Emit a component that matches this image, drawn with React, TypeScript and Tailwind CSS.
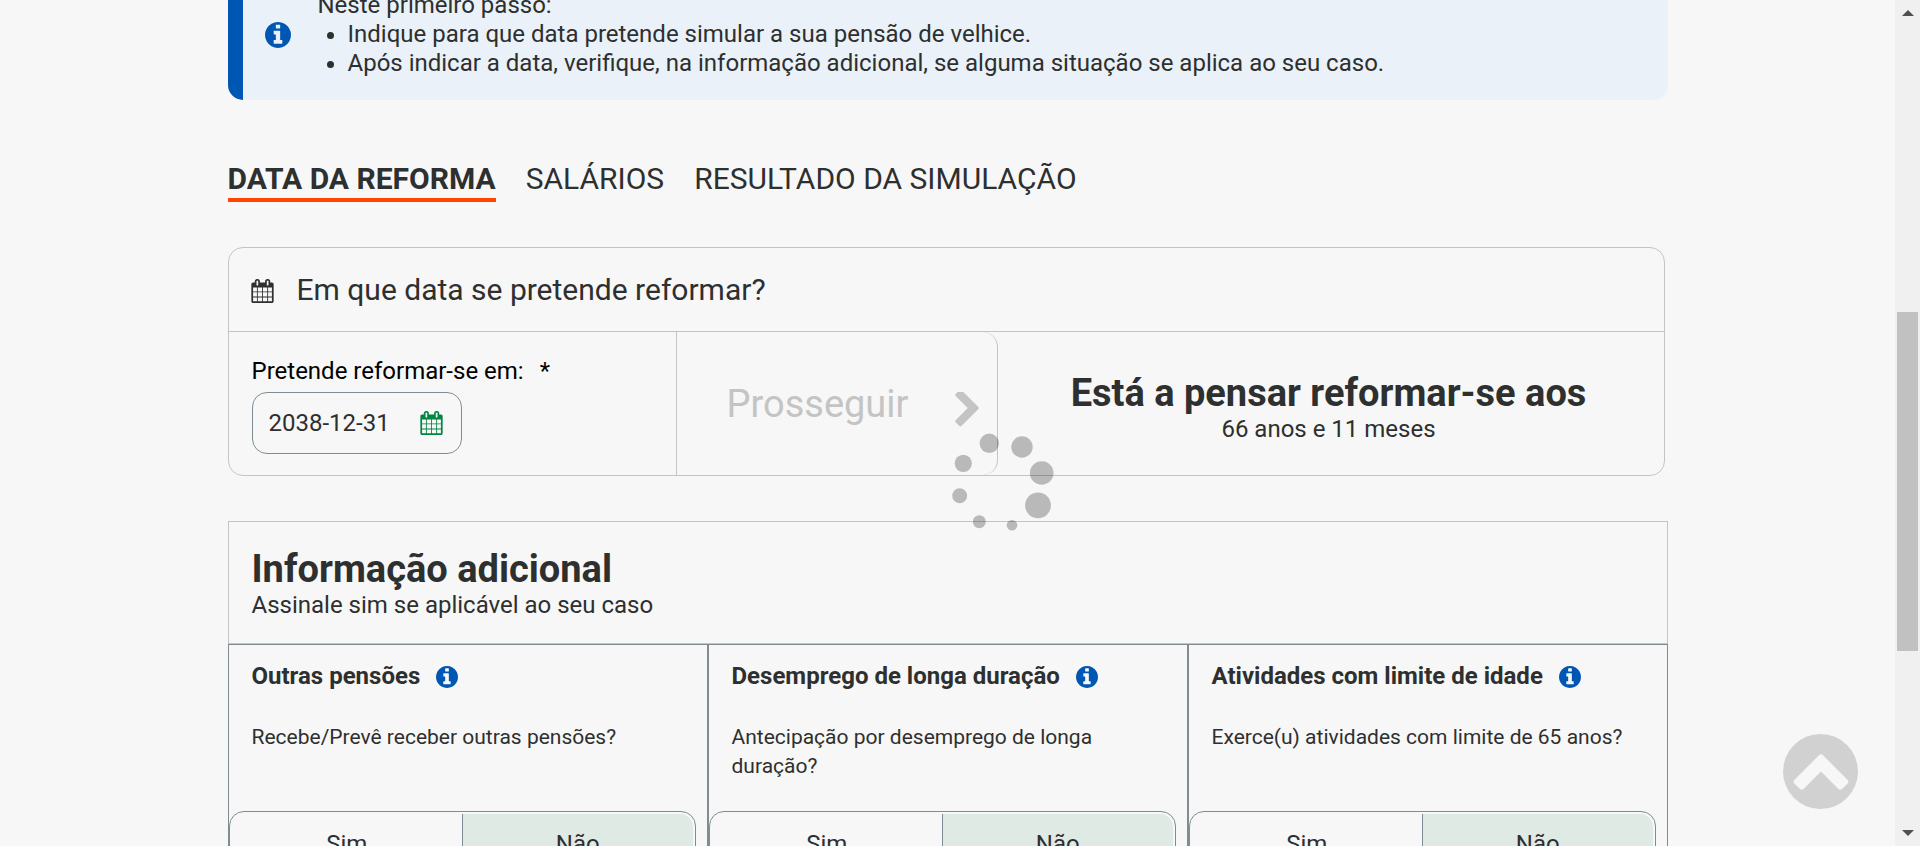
import React from "react";

const CALENDAR =
  "M192 1664h288v-288h-288v288zm352 0h320v-288h-320v288zm-352-352h288v-320h-288v320zm352 0h320v-320h-320v320zm-352-384h288v-288h-288v288zm736 736h320v-288h-320v288zm-384-736h320v-288h-320v288zm768 736h288v-288h-288v288zm-384-352h320v-320h-320v320zm-352-864v-288q0-13-9.5-22.5t-22.5-9.5h-64q-13 0-22.5 9.5t-9.5 22.5v288q0 13 9.5 22.5t22.5 9.5h64q13 0 22.5-9.5t9.5-22.5zm736 864h288v-320h-288v320zm-384-384h320v-288h-320v288zm384 0h288v-288h-288v288zm32-480v-288q0-13-9.5-22.5t-22.5-9.5h-64q-13 0-22.5 9.5t-9.5 22.5v288q0 13 9.5 22.5t22.5 9.5h64q13 0 22.5-9.5t9.5-22.5zm384-64v1280q0 52-38 90t-90 38h-1408q-52 0-90-38t-38-90v-1280q0-52 38-90t90-38h128v-96q0-66 47-113t113-47h64q66 0 113 47t47 113v96h384v-96q0-66 47-113t113-47h64q66 0 113 47t47 113v96h128q52 0 90 38t38 90z";
const INFO =
  "M1152 1376v-160q0-14-9-23t-23-9h-96v-512q0-14-9-23t-23-9h-320q-14 0-23 9t-9 23v160q0 14 9 23t23 9h96v320h-96q-14 0-23 9t-9 23v160q0 14 9 23t23 9h448q14 0 23-9t9-23zm-128-896v-160q0-14-9-23t-23-9h-192q-14 0-23 9t-9 23v160q0 14 9 23t23 9h192q14 0 23-9t9-23zm640 416q0 209-103 385.5t-279.5 279.5-385.5 103-385.5-103-279.5-279.5-103-385.5 103-385.5 279.5-279.5 385.5-103 385.5 103 279.5 279.5 103 385.5z";
const CHEVRON =
  "M1363 877l-742 742q-19 19-45 19t-45-19l-166-166q-19-19-19-45t19-45l531-531-531-531q-19-19-19-45t19-45l166-166q19-19 45-19t45 19l742 742q19 19 19 45t-19 45z";

function CalendarIcon({ className }: { className: string }) {
  return (
    <svg viewBox="64 0 1664 1792" fill="currentColor" aria-hidden="true" className={className}>
      <path d={CALENDAR} />
    </svg>
  );
}

function InfoIcon({ className }: { className: string }) {
  return (
    <svg viewBox="128 128 1536 1536" fill="currentColor" aria-hidden="true" className={className}>
      <path d={INFO} />
    </svg>
  );
}

const tabs = ["DATA DA REFORMA", "SALÁRIOS", "RESULTADO DA SIMULAÇÃO"];

const questions = [
  { title: "Outras pensões", text: "Recebe/Prevê receber outras pensões?" },
  { title: "Desemprego de longa duração", text: "Antecipação por desemprego de longa duração?" },
  { title: "Atividades com limite de idade", text: "Exerce(u) atividades com limite de 65 anos?" },
];

const dots = [
  [41.3, 11.3, 9.7],
  [74, 15, 10.7],
  [93.7, 41, 11.8],
  [90, 73.3, 12.9],
  [64, 93.3, 5.3],
  [31.3, 89.7, 6.5],
  [11.7, 63.7, 7.5],
  [15.3, 31.3, 8.6],
];

function Question({ title, text }: { title: string; text: string }) {
  return (
    <section className="border border-[#7f8d92]">
      <div className="flex h-[166px] flex-col gap-8 px-[23px] pt-[17px]">
        <div className="flex items-center gap-4">
          <h3 className="text-[24px] leading-[29px] font-bold">{title}</h3>
          <button type="button" aria-label={`Ajuda: ${title}`} className="text-[#0057b3]">
            <InfoIcon className="block size-[22px]" />
          </button>
        </div>
        <p className="text-[21px] leading-[29px]">{text}</p>
      </div>
      <div className="mr-[11px] grid grid-cols-2 rounded-[15px] border border-[#7f8d92] p-0.5 text-[24px] leading-[29px]">
        <button type="button" aria-pressed="false" className="py-4">
          Sim
        </button>
        <button
          type="button"
          aria-pressed="true"
          className="rounded-r-[13px] border-l border-[#7f8d92] bg-[#e0eae4] py-4"
        >
          Não
        </button>
      </div>
    </section>
  );
}

export default function App() {
  return (
    <div className="flex h-screen overflow-hidden bg-[#f7f7f7] font-['Roboto',sans-serif] text-[#2e2f2f]">
      <main className="min-w-0 flex-1">
        <div className="mx-auto -mt-8 max-w-[1440px]">
          <div className="flex items-center gap-[27px] rounded-[15px] border-l-[15px] border-[#0057b3] bg-[#eaf1f8] pt-[23px] pb-[22px] pl-[22px]">
            <InfoIcon className="size-[26px] shrink-0 text-[#0057b3]" />
            <div className="text-[24px] leading-[29px]">
              <p>Neste primeiro passo:</p>
              <ul className="list-disc pl-[30px]">
                <li>Indique para que data pretende simular a sua pensão de velhice.</li>
                <li>
                  Após indicar a data, verifique, na informação adicional, se alguma situação se
                  aplica ao seu caso.
                </li>
              </ul>
            </div>
          </div>

          <nav className="mt-[60px] flex gap-[30px] text-[30px] leading-[37px]">
            {tabs.map((tab, i) => (
              <a
                key={tab}
                href="#"
                className={
                  i === 0
                    ? "border-b-4 border-[#ff4500] pb-px font-bold"
                    : "border-b-4 border-transparent pb-px"
                }
              >
                {tab}
              </a>
            ))}
          </nav>

          <section className="mt-[45px] mr-[3px] rounded-[15px] border border-[#c4c4c4]">
            <header className="flex h-[84px] items-center gap-[23px] border-b border-[#c4c4c4] px-[22px]">
              <CalendarIcon className="mt-0.5 h-[24px] w-[23px]" />
              <h2 className="text-[30px] leading-[37px]">Em que data se pretende reformar?</h2>
            </header>
            <div className="grid grid-cols-[447fr_322fr_666fr]">
              <div className="px-[23px] pt-[25px] pb-[21px]">
                <label
                  htmlFor="data"
                  className="flex gap-4 text-[24px] leading-[29px] text-black"
                >
                  Pretende reformar-se em: <span>*</span>
                </label>
                <div className="mt-1.5 flex h-[62px] w-[210px] items-center rounded-[15px] border border-[#7f8d92] pr-[18px] pl-4">
                  <input
                    id="data"
                    type="text"
                    defaultValue="2038-12-31"
                    className="w-0 min-w-0 flex-1 bg-transparent text-[24px] leading-[29px] outline-none"
                  />
                  <button type="button" aria-label="Escolher data" className="text-[#008542]">
                    <CalendarIcon className="block h-[24px] w-[23px]" />
                  </button>
                </div>
              </div>
              <button
                type="button"
                disabled
                className="flex items-center justify-between rounded-r-[15px] border-x border-[#c4c4c4] pr-[18px] pl-[50px] text-[38px] leading-[46px] text-[#c4c4c4]"
              >
                Prosseguir
                <svg viewBox="346 128 1036 1536" fill="currentColor" aria-hidden="true" className="mt-3 h-[35px] w-[24px]">
                  <path d={CHEVRON} />
                </svg>
              </button>
              <div className="flex flex-col items-center justify-center pt-2 pr-1 text-center">
                <h2 className="text-[38px] leading-[44px] font-bold">Está a pensar reformar-se aos</h2>
                <p className="text-[24px] leading-[29px]">66 anos e 11 meses</p>
              </div>
            </div>
          </section>

          <section className="mt-[45px]">
            <header className="border border-[#c4c4c4] px-[23px] pt-[26px] pb-[23px]">
              <h2 className="text-[38px] leading-[43px] font-bold">Informação adicional</h2>
              <p className="text-[24px] leading-[29px]">Assinale sim se aplicável ao seu caso</p>
            </header>
            <div className="grid grid-cols-3">
              {questions.map((q) => (
                <Question key={q.title} title={q.title} text={q.text} />
              ))}
            </div>
          </section>
        </div>
      </main>

      <div className="flex w-[25px] shrink-0 flex-col items-center bg-[#f0f0f0] py-2.5" aria-hidden="true">
        <svg viewBox="0 0 12 6" className="h-1.5 w-3 fill-[#505050]">
          <path d="M0 6L6 0l6 6z" />
        </svg>
        <div className="flex-[296]" />
        <div className="w-[21px] flex-[339] bg-[#c1c1c1]" />
        <div className="flex-[179]" />
        <svg viewBox="0 0 12 6" className="h-1.5 w-3 fill-[#505050]">
          <path d="M0 0h12L6 6z" />
        </svg>
      </div>

      <svg viewBox="0 0 106 104" role="status" aria-label="A carregar" className="pointer-events-none fixed top-[432px] left-[948px] h-[104px] w-[106px] fill-black/25">
        {dots.map(([cx, cy, r]) => (
          <circle key={r} cx={cx} cy={cy} r={r} />
        ))}
      </svg>

      <button
        type="button"
        aria-label="Voltar ao topo"
        className="fixed right-[62px] bottom-[37px] flex size-[75px] items-center justify-center rounded-full bg-[#d1d1d1] text-[#f7f7f7]"
      >
        <svg viewBox="0 0 56 36" className="h-9 w-14" fill="currentColor">
          <path d="M26 1.2q2-2 4 0L54.700 26q1.500 1.700 0 3.400L49 35q-1.800 1.500-3.600 0L28 17.500 10.600 35Q8.800 36.500 7 35L1.300 29.400q-1.500-1.700 0-3.400z" />
        </svg>
      </button>
    </div>
  );
}
